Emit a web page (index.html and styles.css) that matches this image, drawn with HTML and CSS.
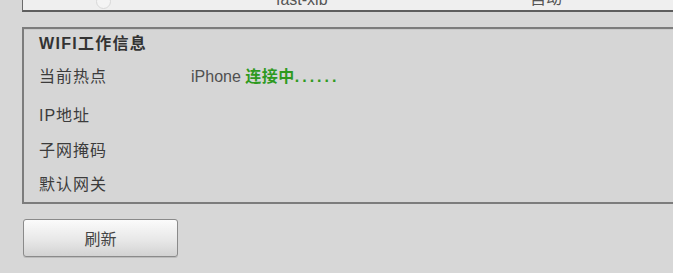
FILE: index.html
```html
<!DOCTYPE html>
<html lang="zh">
<head>
<meta charset="utf-8">
<link rel="stylesheet" href="styles.css">
</head>
<body>
<div class="page">
  <div class="top-table">
    <span class="radio"></span>
    <span class="ssid">fast-xib</span>
    <span class="mode">自动</span>
  </div>
  <div class="info">
    <div class="title">WIFI工作信息</div>
    <div class="row r1"><span class="label">当前热点</span><span class="value">iPhone <b class="status">连接中<span class="dots">......</span></b></span></div>
    <div class="row r2"><span class="label">IP地址</span></div>
    <div class="row r3"><span class="label">子网掩码</span></div>
    <div class="row r4"><span class="label">默认网关</span></div>
  </div>
  <button class="btn">刷新</button>
</div>
</body>
</html>
```

FILE: styles.css
```css
html, body {
  margin: 0;
  padding: 0;
  background: #d7d7d7;
  overflow: hidden;
}
.page {
  width: 673px;
  height: 273px;
  overflow: hidden;
  font-family: "Liberation Sans", Arial, "Noto Sans CJK SC", sans-serif;
  color: #3a3a3a;
  font-size: 16px;
}
.top-table {
  margin-top: -12px;
  margin-left: 22px;
  width: 700px;
  height: 22px;
  background: #efefef;
  border-left: 1px solid #6a6a6a;
  border-bottom: 2px solid #5e5e5e;
  font-size: 16px;
  color: #555;
  position: relative;
}
.radio {
  position: absolute;
  left: 73px;
  top: 6px;
  width: 13px;
  height: 13px;
  border-radius: 50%;
  border: 1px solid #d8d8d8;
  background: #f4f4f4;
}
.ssid {
  position: absolute;
  left: 253px;
  top: 3px;
  line-height: 18px;
}
.mode {
  position: absolute;
  left: 507px;
  top: 2px;
  line-height: 18px;
}
.info {
  margin-top: 15px;
  margin-left: 22px;
  width: 700px;
  height: 177px;
  border-top: 2px solid #7c7c7c;
  border-left: 2px solid #7c7c7c;
  border-bottom: 2px solid #7c7c7c;
  box-shadow: inset 0 1px 0 #c9c9c9;
  background: #d6d6d6;
  box-sizing: border-box;
  padding-left: 15px;
  padding-top: 5px;
}
.title {
  font-weight: bold;
  height: 20px;
  line-height: 20px;
  color: #333;
  font-size: 16px;
  letter-spacing: 1.3px;
}
.row {
  display: flex;
  align-items: center;
  height: 20px;
  line-height: 20px;
  color: #3c3c3c;
}
.r1 { margin-top: 13px; }
.r2 { margin-top: 19px; }
.r3 { margin-top: 15px; }
.r4 { margin-top: 14px; }
.label {
  width: 152px;
  letter-spacing: 1px;
}
.value {
  color: #505050;
}
.status {
  color: #2f9a1f;
  font-size: 16px;
  font-weight: bold;
  letter-spacing: 0.5px;
}
.dots {
  letter-spacing: 3px;
}
.btn {
  display: block;
  margin-top: 15px;
  margin-left: 23px;
  width: 155px;
  height: 38px;
  border: 1px solid #8a8a8a;
  border-radius: 3px;
  background: linear-gradient(#fbfbfb, #e6e6e6 60%, #d2d2d2);
  box-shadow: 0 1px 0 #bcbcbc;
  font-family: "Liberation Sans", Arial, "Noto Sans CJK SC", sans-serif;
  font-size: 16px;
  color: #444;
  padding: 0;
}
```
